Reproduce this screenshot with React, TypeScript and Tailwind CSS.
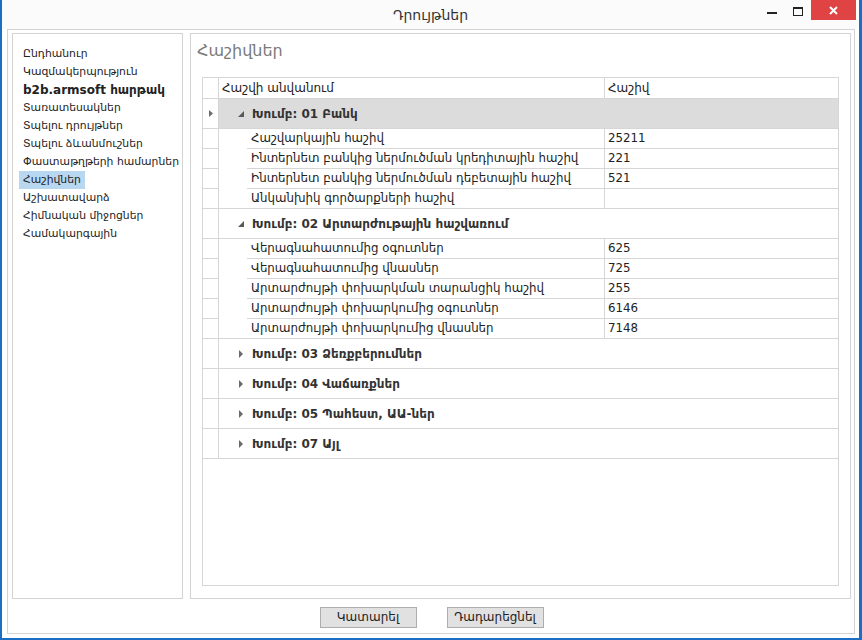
import React from "react";

const font = { fontFamily: '"DejaVu Sans", "Noto Sans", sans-serif' };

const menu = [
  "Ընդհանուր",
  "Կազմակերպություն",
  "b2b.armsoft հարթակ",
  "Տառատեսակներ",
  "Տպելու դրույթներ",
  "Տպելու ձևանմուշներ",
  "Փաստաթղթերի համարներ",
  "Հաշիվներ",
  "Աշխատավարձ",
  "Հիմնական միջոցներ",
  "Համակարգային",
];

type Group = { title: string; open: boolean; rows: [string, string][] };

const groups: Group[] = [
  {
    title: "Խումբ: 01 Բանկ",
    open: true,
    rows: [
      ["Հաշվարկային հաշիվ", "25211"],
      ["Ինտերնետ բանկից ներմուծման կրեդիտային հաշիվ", "221"],
      ["Ինտերնետ բանկից ներմուծման դեբետային հաշիվ", "521"],
      ["Անկանխիկ գործարքների հաշիվ", ""],
    ],
  },
  {
    title: "Խումբ: 02 Արտարժութային հաշվառում",
    open: true,
    rows: [
      ["Վերագնահատումից օգուտներ", "625"],
      ["Վերագնահատումից վնասներ", "725"],
      ["Արտարժույթի փոխարկման տարանցիկ հաշիվ", "255"],
      ["Արտարժույթի փոխարկումից օգուտներ", "6146"],
      ["Արտարժույթի փոխարկումից վնասներ", "7148"],
    ],
  },
  { title: "Խումբ: 03 Ձեռքբերումներ", open: false, rows: [] },
  { title: "Խումբ: 04 Վաճառքներ", open: false, rows: [] },
  { title: "Խումբ: 05 Պահեստ, ԱԱ-ներ", open: false, rows: [] },
  { title: "Խումբ: 07 Այլ", open: false, rows: [] },
];

const Expander = ({ open }: { open: boolean }) =>
  open ? (
    <svg width="6" height="6" viewBox="0 0 6 6" className="mr-[8px]">
      <path d="M6 0 L6 6 L0 6 Z" fill="#595959" />
    </svg>
  ) : (
    <svg width="4" height="8" viewBox="0 0 4 8" className="mr-[9px]">
      <path d="M0 0 L4 4 L0 8 Z" fill="#6a6a6a" />
    </svg>
  );

export default function App() {
  return (
    <div
      className="w-[862px] h-[640px] bg-white border-l-2 border-r-[3px] border-b-2 border-[#1b6ec2] flex flex-col text-[12px] text-[#222]"
      style={font}
    >
      {/* title bar */}
      <div className="h-[29px] relative flex justify-center items-center bg-[#fbfbfb]">
        <span className="text-[14px] text-[#333] mt-[1px]">Դրույթներ</span>
        <div className="absolute right-[3px] top-0 flex items-start">
          <div className="w-[10px] h-[2px] bg-[#222] mt-[12px] mr-[16px]" />
          <div className="w-[10px] h-[9px] border border-[#222] border-t-2 mt-[7px] mr-[8px]" />
          <div className="w-[45px] h-[20px] bg-[#e04343] flex items-center justify-center">
            <svg width="9" height="9" viewBox="0 0 9 9">
              <path d="M1 1 L8 8 M8 1 L1 8" stroke="#fff" strokeWidth="2" />
            </svg>
          </div>
        </div>
      </div>

      {/* frame */}
      <div className="ml-[5px] mr-[4px] mb-[4px] flex-1 border border-[#d3d3d3] flex flex-col pt-[3px] pl-[4px] pr-[3px]">
        <div className="flex gap-[7px] h-[566px]">
          {/* left list */}
          <div className="w-[171px] border border-[#d3d3d3] pt-[11px] pl-[6px] flex flex-col items-start text-[10.8px]">
            {menu.map((m, i) => (
              <div
                key={i}
                className={`h-[18px] leading-[18px] px-[4px] whitespace-nowrap ${
                  i === 2 ? "font-bold text-[12px]" : ""
                } ${i === 7 ? "bg-[#b8d7f0]" : ""}`}
              >
                {m}
              </div>
            ))}
          </div>

          {/* right panel */}
          <div className="flex-1 border border-[#d3d3d3] flex flex-col">
            <div className="h-[43px] pl-[6px] pt-[5px] text-[16px] text-[#7a7a7a]">Հաշիվներ</div>
            <div className="mx-[11px] mb-[12px] flex-1 border border-[#d6d6d6] flex flex-col">
              {/* header */}
              <div className="flex h-[21px] border-b border-[#d6d6d6]">
                <div className="w-[16px] border-r border-[#d6d6d6]" />
                <div className="w-[386px] border-r border-[#d6d6d6] pl-[3px] leading-[20px]">
                  Հաշվի անվանում
                </div>
                <div className="flex-1 pl-[3px] leading-[20px]">Հաշիվ</div>
              </div>

              {groups.map((g, gi) => (
                <React.Fragment key={gi}>
                  <div className="flex h-[30px] border-b border-[#d6d6d6]">
                    <div className="w-[16px] border-r border-[#d6d6d6] flex items-center justify-center">
                      {gi === 0 && (
                        <svg width="4" height="7" viewBox="0 0 4 7">
                          <path d="M0 0 L4 3.5 L0 7 Z" fill="#6d6d6d" />
                        </svg>
                      )}
                    </div>
                    <div
                      className={`flex-1 flex items-center font-bold text-[#333] ${
                        gi === 0 ? "bg-[#dcdcdc]" : ""
                      } ${g.open ? "pl-[19px]" : "pl-[20px]"}`}
                    >
                      <Expander open={g.open} />
                      {g.title}
                    </div>
                  </div>
                  {g.rows.map((r, ri) => {
                    const last = ri === g.rows.length - 1;
                    return (
                      <div key={ri} className="flex h-[20px] text-[11.8px]">
                        <div className="w-[16px] border-r border-b border-[#d6d6d6]" />
                        <div
                          className={`w-[28px] ${last ? "border-b border-[#d6d6d6]" : ""}`}
                        />
                        <div className="w-[358px] border-r border-b border-[#d6d6d6] pl-[4px] leading-[19px] whitespace-nowrap overflow-hidden">
                          {r[0]}
                        </div>
                        <div className="flex-1 border-b border-[#d6d6d6] pl-[3px] leading-[19px]">
                          {r[1]}
                        </div>
                      </div>
                    );
                  })}
                </React.Fragment>
              ))}
            </div>
          </div>
        </div>

        {/* buttons */}
        <div className="flex justify-center gap-[30px] mt-[8px]">
          <button className="w-[97px] h-[21px] bg-[#e1e1e1] border border-[#adadad] text-[12px] text-[#222] leading-[19px]">
            Կատարել
          </button>
          <button className="w-[97px] h-[21px] bg-[#e1e1e1] border border-[#adadad] text-[12px] text-[#222] leading-[19px]">
            Դադարեցնել
          </button>
        </div>
      </div>
    </div>
  );
}
